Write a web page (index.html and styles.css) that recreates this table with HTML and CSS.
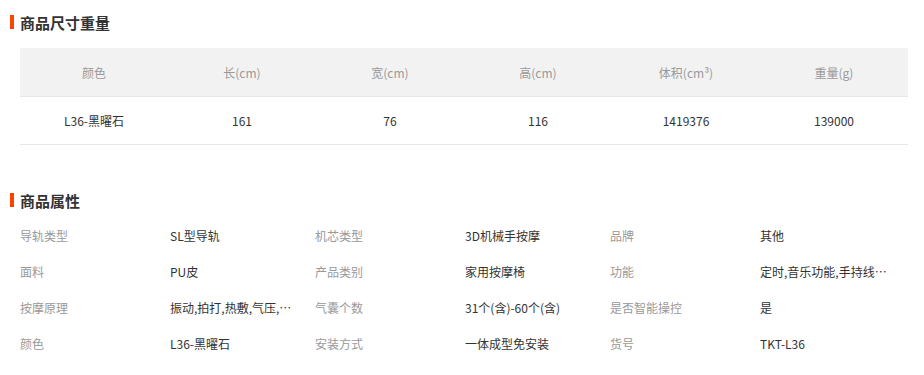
FILE: index.html
```html
<!DOCTYPE html>
<html lang="zh-CN">
<head>
<meta charset="utf-8">
<title>商品参数</title>
<link rel="stylesheet" href="styles.css">
</head>
<body>
<section class="block">
  <h2 class="title">商品尺寸重量</h2>
  <table class="size-table">
    <thead>
      <tr><th>颜色</th><th>长(cm)</th><th>宽(cm)</th><th>高(cm)</th><th>体积(cm³)</th><th>重量(g)</th></tr>
    </thead>
    <tbody>
      <tr><td>L36-黑曜石</td><td>161</td><td>76</td><td>116</td><td>1419376</td><td>139000</td></tr>
    </tbody>
  </table>
</section>
<section class="block block-attr">
  <h2 class="title">商品属性</h2>
  <dl class="attrs">
    <dt>导轨类型</dt><dd>SL型导轨</dd>
    <dt>机芯类型</dt><dd>3D机械手按摩</dd>
    <dt>品牌</dt><dd>其他</dd>
    <dt>面料</dt><dd>PU皮</dd>
    <dt>产品类别</dt><dd>家用按摩椅</dd>
    <dt>功能</dt><dd title="定时,音乐功能,手持线控,记忆功能">定时,音乐功能,手持线控,记忆功能</dd>
    <dt>按摩原理</dt><dd title="振动,拍打,热敷,气压,揉捏,指压">振动,拍打,热敷,气压,揉捏,指压</dd>
    <dt>气囊个数</dt><dd>31个(含)-60个(含)</dd>
    <dt>是否智能操控</dt><dd>是</dd>
    <dt>颜色</dt><dd>L36-黑曜石</dd>
    <dt>安装方式</dt><dd>一体成型免安装</dd>
    <dt>货号</dt><dd>TKT-L36</dd>
  </dl>
</section>
</body>
</html>
```
FILE: styles.css
```css
html, body {
  margin: 0;
  padding: 0;
  background: #fff;
}
body {
  font-family: "Noto Sans CJK SC", "Liberation Sans", sans-serif;
  font-size: 12px;
  color: #333;
}
.block {
  padding-top: 12px;
}
.block-attr {
  padding-top: 45px;
}
.title {
  display: flex;
  align-items: center;
  height: 20px;
  margin: 0;
  padding-left: 10px;
  font-size: 15px;
  font-weight: bold;
  color: #333;
}
.title::before {
  content: "";
  width: 4px;
  height: 14px;
  background: #f40;
  margin-right: 6px;
}
.size-table {
  margin: 16px 0 0 20px;
  width: 888px;
  border-collapse: collapse;
  table-layout: fixed;
}
.size-table th {
  height: 48px;
  padding: 0;
  background: #f2f2f2;
  color: #999;
  font-weight: normal;
  text-align: center;
  border-bottom: 1px solid #e8e8e8;
}
.size-table td {
  height: 47px;
  padding: 0;
  text-align: center;
  color: #333;
  border-bottom: 1px solid #e8e8e8;
}
.attrs {
  margin: 7px 0 0 20px;
  display: grid;
  grid-template-columns: 150px 145px 150px 145px 150px 145px;
  grid-auto-rows: 36px;
  align-items: center;
}
.attrs dt {
  color: #999;
}
.attrs dd {
  margin: 0;
  color: #333;
  max-width: 128px;
  white-space: nowrap;
  overflow: hidden;
  text-overflow: ellipsis;
}
```
